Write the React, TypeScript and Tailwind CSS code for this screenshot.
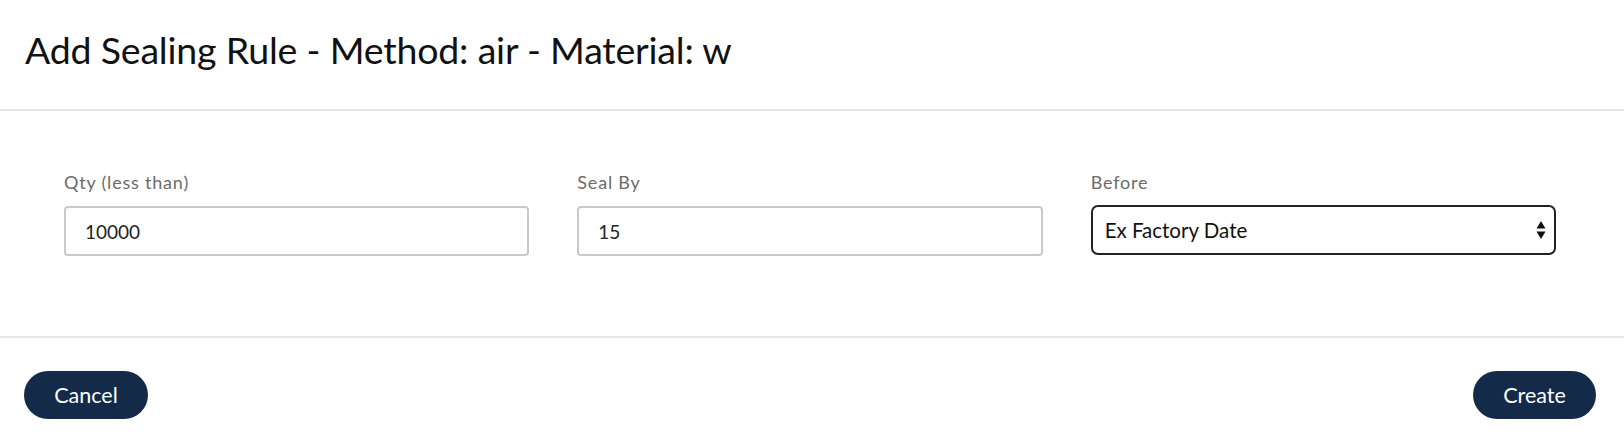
const fields = [
  { label: "Qty (less than)", value: "10000" },
  { label: "Seal By", value: "15" },
];

export default function App() {
  return (
    <div className="w-[1624px] h-[444px] bg-white text-[#111] font-['Lato','Liberation_Sans',sans-serif]">
      <header className="h-[111px] pl-[25px] pt-[31px] border-b-2 border-[#e6e6e6]">
        <h1 className="text-[37.5px] leading-none tracking-[-0.2px]">
          Add Sealing Rule - Method: air - Material: w
        </h1>
      </header>

      <section className="h-[225px] pl-16 pr-[68px] pt-[61px] grid grid-cols-3 gap-x-12 items-start">
        {fields.map((f) => (
          <div key={f.label} className="flex flex-col">
            <label className="text-[18px] tracking-[0.8px] text-[#6b6b6b] leading-5 mb-[14px]">{f.label}</label>
            <input
              defaultValue={f.value}
              className="h-[50px] rounded-[4px] border-2 border-[#c5cacd] px-[19px] text-[19px] text-[#222] outline-none"
            />
          </div>
        ))}
        <div className="flex flex-col">
          <label className="text-[18px] tracking-[0.8px] text-[#6b6b6b] leading-5 mb-[13px]">Before</label>
          <div className="relative">
            <select
              defaultValue="ex"
              className="w-full h-[50px] appearance-none rounded-[7px] border-2 border-[#222] pl-[12px] pr-8 text-[20.5px] text-[#111] bg-white outline-none"
            >
              <option value="ex">Ex Factory Date</option>
            </select>
            <svg className="absolute right-[10px] top-1/2 -translate-y-1/2 pointer-events-none" width="10" height="19" viewBox="0 0 10 19">
              <path d="M5 0.5 L9.5 8 H0.5 Z M5 18.5 L9.5 11 H0.5 Z" fill="#111" />
            </svg>
          </div>
        </div>
      </section>

      <footer className="border-t-2 border-[#e6e6e6] flex justify-between pl-6 pr-7 pt-[33px]">
        <button className="h-12 w-[124px] rounded-full bg-[#132a49] text-white text-[21.5px]">Cancel</button>
        <button className="h-12 w-[123px] rounded-full bg-[#132a49] text-white text-[21.5px]">Create</button>
      </footer>
    </div>
  );
}
